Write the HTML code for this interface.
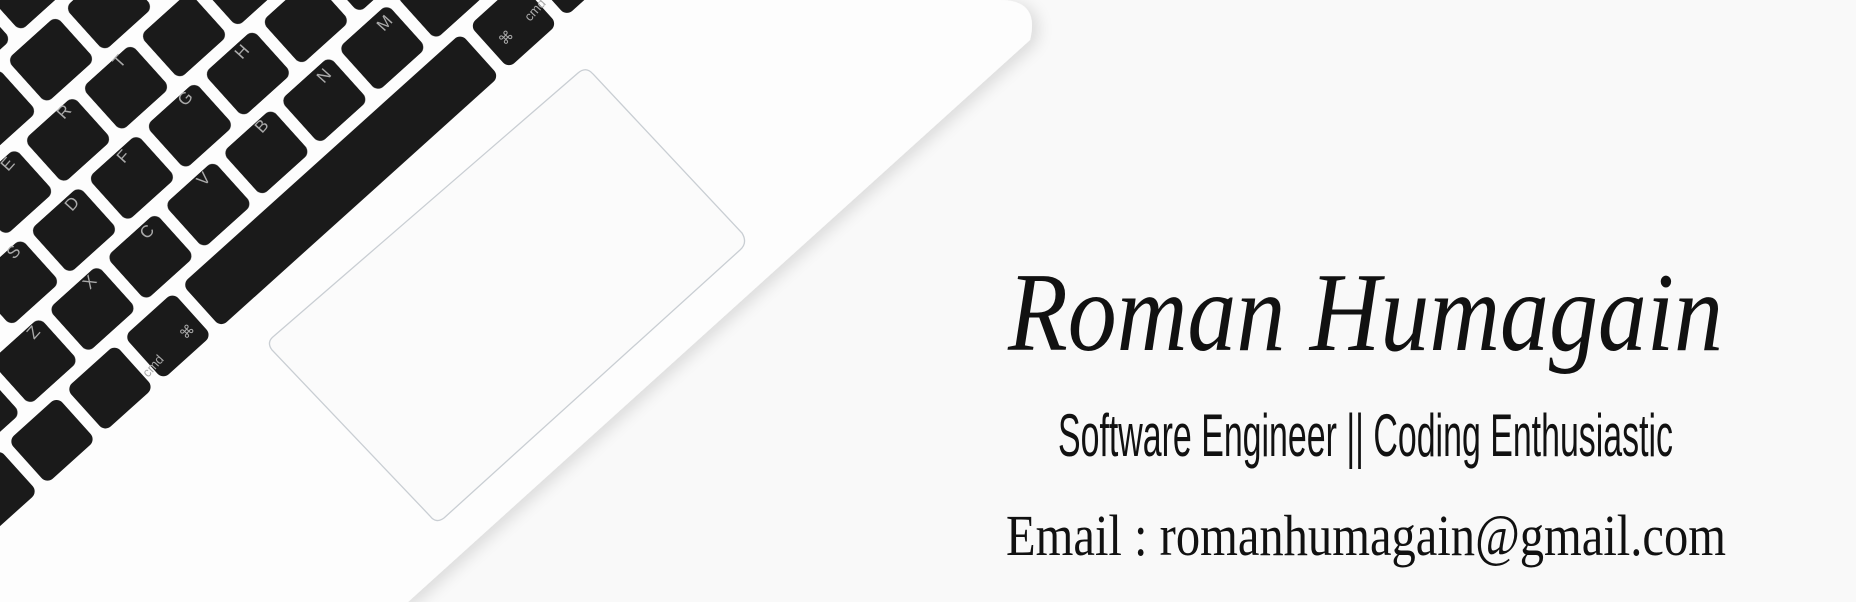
<!DOCTYPE html>
<html><head><meta charset="utf-8"><style>
html,body{margin:0;padding:0;width:1856px;height:602px;overflow:hidden;background:#f8f8f8}
svg{display:block}
</style></head><body>
<svg width="1856" height="602" viewBox="0 0 1856 602" xmlns="http://www.w3.org/2000/svg">
<defs>
<filter id="sh" x="-10%" y="-10%" width="130%" height="130%">
<feGaussianBlur in="SourceAlpha" stdDeviation="8"/><feOffset dx="6" dy="3"/>
<feComponentTransfer><feFuncA type="linear" slope="0.13"/></feComponentTransfer>
<feMerge><feMergeNode/><feMergeNode in="SourceGraphic"/></feMerge>
</filter>
<pattern id="k" patternUnits="userSpaceOnUse" x="0" y="0" width="100" height="78">
<rect x="0" y="0" width="59" height="66" rx="8" fill="#1a1a1a"/>
</pattern>
</defs>
<rect width="1856" height="602" fill="#f9f9f9"/>
<path d="M0,0 L1000,0 Q1040,0 1030,40 L408,602 L0,602 Z" fill="#fdfdfd" filter="url(#sh)"/>
<g transform="rotate(48)">
<rect x="0" y="-1560" width="59" height="3120" fill="url(#k)" transform="translate(262,-129)"/>
<rect x="0" y="-1560" width="59" height="3120" fill="url(#k)" transform="translate(191,-90)"/>
<rect x="0" y="-1560" width="59" height="3120" fill="url(#k)" transform="translate(120,-68)"/>
<rect x="0" y="-1560" width="59" height="3120" fill="url(#k)" transform="translate(49,-31)"/>
<rect x="0" y="-1560" width="59" height="3120" fill="url(#k)" transform="translate(-22,-60)"/>
<rect x="0" y="-1560" width="59" height="3120" fill="url(#k)" transform="translate(-93,-20)"/>
<rect x="0" y="-1560" width="59" height="3120" fill="url(#k)" transform="translate(-164,-50)"/>
<rect x="333" y="-320" width="58" height="375" rx="8" fill="#1a1a1a"/>
<rect x="333" y="-398" width="58" height="66" rx="8" fill="#1a1a1a"/>
<rect x="333" y="-476" width="58" height="66" rx="8" fill="#1a1a1a"/>
<rect x="333" y="-554" width="58" height="66" rx="8" fill="#1a1a1a"/>
<rect x="333" y="67" width="58" height="66" rx="8" fill="#1a1a1a"/>
<rect x="333" y="145" width="58" height="66" rx="8" fill="#1a1a1a"/>
<rect x="333" y="223" width="58" height="66" rx="8" fill="#1a1a1a"/>
<rect x="333" y="301" width="58" height="66" rx="8" fill="#1a1a1a"/>
</g>
<g fill="#aaa" font-family="Liberation Sans, sans-serif" font-size="17">
<text x="262" y="134" transform="rotate(-48 262 134)">B</text>
<text x="204" y="187" transform="rotate(-48 204 187)">V</text>
<text x="147" y="240" transform="rotate(-48 147 240)">C</text>
<text x="90" y="290" transform="rotate(-48 90 290)">X</text>
<text x="185" y="107" transform="rotate(-48 185 107)">G</text>
<text x="242" y="60" transform="rotate(-48 242 60)">H</text>
<text x="324" y="84" transform="rotate(-48 324 84)">N</text>
<text x="384" y="32" transform="rotate(-48 384 32)">M</text>
<text x="124" y="164" transform="rotate(-48 124 164)">F</text>
<text x="72" y="212" transform="rotate(-48 72 212)">D</text>
<text x="64" y="120" transform="rotate(-48 64 120)">R</text>
<text x="120" y="69" transform="rotate(-48 120 69)">T</text>
<text x="14" y="260" transform="rotate(-48 14 260)">S</text>
<text x="34" y="340" transform="rotate(-48 34 340)">Z</text>
<text x="8" y="172" transform="rotate(-48 8 172)">E</text>
<text x="505" y="46" transform="rotate(-48 505 46)" font-size="14">⌘</text>
<text x="530" y="22" transform="rotate(-48 530 22)" font-size="13">cmd</text>
<text x="186" y="340" transform="rotate(-48 186 340)" font-size="14">⌘</text>
<text x="148" y="378" transform="rotate(-48 148 378)" font-size="13">cmd</text>
</g>
<path d="M578,73 Q586,66 593,74 L742,233 Q748,243 740,250 L444,518 Q436,524 430,516 L272,350 Q266,342 274,336 Z" fill="#fbfbfb" stroke="#c9ced3" stroke-width="1.3"/>
<text x="1008" y="350" font-family="Liberation Serif, serif" font-style="italic" font-size="112" fill="#111" textLength="715" lengthAdjust="spacingAndGlyphs">Roman Humagain</text>
<text x="1058" y="456" font-family="Liberation Sans, sans-serif" font-size="60" fill="#111" textLength="615" lengthAdjust="spacingAndGlyphs">Software Engineer || Coding Enthusiastic</text>
<text x="1006" y="555" font-family="Liberation Serif, serif" font-size="58" fill="#111" textLength="720" lengthAdjust="spacingAndGlyphs">Email : romanhumagain@gmail.com</text>
</svg>
</body></html>
